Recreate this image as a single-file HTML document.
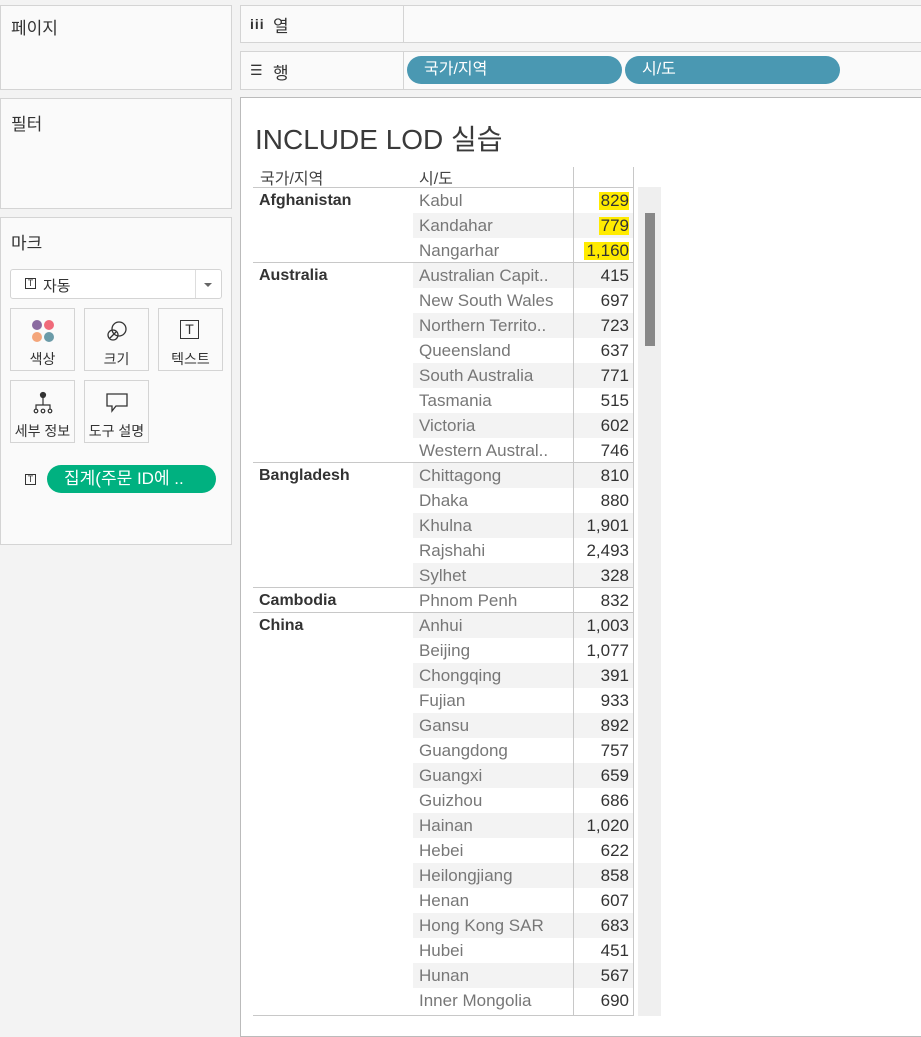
<!DOCTYPE html>
<html><head><meta charset="utf-8"><style>
*{margin:0;padding:0;box-sizing:border-box}
body{width:921px;height:1021px;background:#f3f3f3;position:relative;overflow:hidden;font-family:"Liberation Sans","Noto Sans CJK KR",sans-serif;color:#333}
.a{position:absolute}
.panel{position:absolute;background:#fafafa;border:1px solid #d4d4d4}
.lbl{position:absolute;font-size:17px;color:#333}
.pill{position:absolute;height:28px;border-radius:14px;background:#4a98b2;color:#fff;font-size:16px;line-height:28px;padding-left:17px;padding-top:0}
.card{position:absolute;width:65px;height:63px;border:1px solid #d4d4d4;background:#fafafa;font-size:14px;text-align:center}
.card span{position:absolute;left:0;right:0;top:40px}
.r{position:absolute;left:413px;width:220px;height:25px;font-size:17px;line-height:25px}
.r.s{background:#f3f3f3}
.r .c{position:absolute;left:6px;color:#777;white-space:nowrap}
.r .n{position:absolute;right:4px;color:#333}
.r .n.h{background:#ffeb00;padding-left:2px;top:4px;line-height:18px;height:18px}
.co{position:absolute;left:259px;font-size:16px;font-weight:bold;color:#333;line-height:25px}
.hl{position:absolute;left:253px;width:380px;height:1px;background:#c8c8c8}
</style></head><body>
<div class="panel" style="left:0;top:5px;width:232px;height:85px"></div>
<div class="lbl" style="left:11px;top:14px">페이지</div>
<div class="panel" style="left:0;top:98px;width:232px;height:111px"></div>
<div class="lbl" style="left:11px;top:110px">필터</div>
<div class="panel" style="left:0;top:217px;width:232px;height:328px"></div>
<div class="lbl" style="left:11px;top:229px">마크</div>
<div class="a" style="left:10px;top:269px;width:212px;height:30px;border:1px solid #d4d4d4;border-radius:3px;background:#fff"></div>
<div class="a" style="left:195px;top:270px;width:1px;height:28px;background:#ddd"></div>
<div class="a" style="left:204px;top:283px;border-left:4px solid transparent;border-right:4px solid transparent;border-top:4px solid #666"></div>
<div class="a" style="left:25px;top:278px;width:11px;height:11px;border:1px solid #333;font-size:9px;line-height:9px;text-align:center">T</div>
<div class="a" style="left:43px;top:275px;font-size:15px">자동</div>
<div class="card" style="left:10px;top:308px"><svg class="a" style="left:20px;top:10px" width="24" height="24"><circle cx="6" cy="6" r="5" fill="#8a6aa0"/><circle cx="18" cy="6" r="5" fill="#f06a7a"/><circle cx="6" cy="18" r="5" fill="#f4a57a"/><circle cx="18" cy="18" r="5" fill="#6b9ba8"/></svg><span>색상</span></div>
<div class="card" style="left:84px;top:308px"><svg class="a" style="left:20px;top:10px" width="24" height="24" fill="none" stroke="#333" stroke-width="1.3"><circle cx="14" cy="10" r="7"/><circle cx="8" cy="16" r="5"/><line x1="5" y1="19" x2="11" y2="13"/></svg><span>크기</span></div>
<div class="card" style="left:158px;top:308px"><div class="a" style="left:21px;top:11px;width:19px;height:19px;border:1.5px solid #333;font-size:14px;line-height:16px;text-align:center">T</div><span>텍스트</span></div>
<div class="card" style="left:10px;top:380px"><svg class="a" style="left:20px;top:10px" width="24" height="24" fill="none" stroke="#333" stroke-width="1.2"><circle cx="12" cy="4" r="2.5" fill="#333"/><line x1="12" y1="6" x2="12" y2="14"/><path d="M5 18V14H19V18"/><circle cx="5" cy="20" r="1.8"/><circle cx="12" cy="20" r="1.8"/><circle cx="19" cy="20" r="1.8"/></svg><span>세부 정보</span></div>
<div class="card" style="left:84px;top:380px"><svg class="a" style="left:20px;top:10px" width="24" height="24" fill="none" stroke="#333" stroke-width="1.3"><path d="M2 3H22V15H11L7 20V15H2Z"/></svg><span>도구 설명</span></div>
<div class="a" style="left:25px;top:474px;width:11px;height:11px;border:1px solid #333;font-size:9px;line-height:9px;text-align:center">T</div>
<div class="pill" style="left:47px;top:465px;width:169px;background:#00b180;font-size:17px;padding-left:17px">집계(주문 ID에 ..</div>

<div class="panel" style="left:240px;top:5px;width:690px;height:38px"></div>
<div class="a" style="left:403px;top:5px;width:1px;height:38px;background:#d4d4d4"></div>
<div class="a" style="left:250px;top:16px;font-size:14px;letter-spacing:1px;font-weight:bold">iii</div>
<div class="lbl" style="left:273px;top:12px">열</div>
<div class="panel" style="left:240px;top:51px;width:690px;height:39px"></div>
<div class="a" style="left:403px;top:51px;width:1px;height:39px;background:#d4d4d4"></div>
<div class="a" style="left:250px;top:62px;font-size:14px">☰</div>
<div class="lbl" style="left:273px;top:59px">행</div>
<div class="pill" style="left:407px;top:56px;width:215px">국가/지역</div>
<div class="pill" style="left:625px;top:56px;width:215px">시/도</div>

<div class="a" style="left:240px;top:97px;width:690px;height:940px;background:#fff;border:1px solid #bbb"></div>
<div class="a" style="left:255px;top:118px;font-size:28px;color:#3a3a3a">INCLUDE LOD 실습</div>
<div class="a" style="left:260px;top:165px;font-size:16px;color:#444">국가/지역</div>
<div class="a" style="left:419px;top:165px;font-size:16px;color:#444">시/도</div>
<div class="a" style="left:638px;top:187px;width:23px;height:829px;background:#efefef"></div>
<div class="a" style="left:645px;top:213px;width:10px;height:133px;background:#888"></div>

<div class="r" style="top:188px"><span class="c">Kabul</span><span class="n h">829</span></div>
<div class="r s" style="top:213px"><span class="c">Kandahar</span><span class="n h">779</span></div>
<div class="r" style="top:238px"><span class="c">Nangarhar</span><span class="n h">1,160</span></div>
<div class="r s" style="top:263px"><span class="c">Australian Capit..</span><span class="n">415</span></div>
<div class="r" style="top:288px"><span class="c">New South Wales</span><span class="n">697</span></div>
<div class="r s" style="top:313px"><span class="c">Northern Territo..</span><span class="n">723</span></div>
<div class="r" style="top:338px"><span class="c">Queensland</span><span class="n">637</span></div>
<div class="r s" style="top:363px"><span class="c">South Australia</span><span class="n">771</span></div>
<div class="r" style="top:388px"><span class="c">Tasmania</span><span class="n">515</span></div>
<div class="r s" style="top:413px"><span class="c">Victoria</span><span class="n">602</span></div>
<div class="r" style="top:438px"><span class="c">Western Austral..</span><span class="n">746</span></div>
<div class="r s" style="top:463px"><span class="c">Chittagong</span><span class="n">810</span></div>
<div class="r" style="top:488px"><span class="c">Dhaka</span><span class="n">880</span></div>
<div class="r s" style="top:513px"><span class="c">Khulna</span><span class="n">1,901</span></div>
<div class="r" style="top:538px"><span class="c">Rajshahi</span><span class="n">2,493</span></div>
<div class="r s" style="top:563px"><span class="c">Sylhet</span><span class="n">328</span></div>
<div class="r" style="top:588px"><span class="c">Phnom Penh</span><span class="n">832</span></div>
<div class="r s" style="top:613px"><span class="c">Anhui</span><span class="n">1,003</span></div>
<div class="r" style="top:638px"><span class="c">Beijing</span><span class="n">1,077</span></div>
<div class="r s" style="top:663px"><span class="c">Chongqing</span><span class="n">391</span></div>
<div class="r" style="top:688px"><span class="c">Fujian</span><span class="n">933</span></div>
<div class="r s" style="top:713px"><span class="c">Gansu</span><span class="n">892</span></div>
<div class="r" style="top:738px"><span class="c">Guangdong</span><span class="n">757</span></div>
<div class="r s" style="top:763px"><span class="c">Guangxi</span><span class="n">659</span></div>
<div class="r" style="top:788px"><span class="c">Guizhou</span><span class="n">686</span></div>
<div class="r s" style="top:813px"><span class="c">Hainan</span><span class="n">1,020</span></div>
<div class="r" style="top:838px"><span class="c">Hebei</span><span class="n">622</span></div>
<div class="r s" style="top:863px"><span class="c">Heilongjiang</span><span class="n">858</span></div>
<div class="r" style="top:888px"><span class="c">Henan</span><span class="n">607</span></div>
<div class="r s" style="top:913px"><span class="c">Hong Kong SAR</span><span class="n">683</span></div>
<div class="r" style="top:938px"><span class="c">Hubei</span><span class="n">451</span></div>
<div class="r s" style="top:963px"><span class="c">Hunan</span><span class="n">567</span></div>
<div class="r" style="top:988px"><span class="c">Inner Mongolia</span><span class="n">690</span></div>

<div class="co" style="top:188px">Afghanistan</div>
<div class="co" style="top:263px">Australia</div>
<div class="co" style="top:463px">Bangladesh</div>
<div class="co" style="top:588px">Cambodia</div>
<div class="co" style="top:613px">China</div>

<div class="hl" style="top:187px"></div>
<div class="hl" style="top:262px"></div>
<div class="hl" style="top:462px"></div>
<div class="hl" style="top:587px"></div>
<div class="hl" style="top:612px"></div>
<div class="hl" style="top:1015px"></div>
<div class="a" style="left:573px;top:167px;width:1px;height:849px;background:#c8c8c8"></div>
<div class="a" style="left:633px;top:167px;width:1px;height:849px;background:#c8c8c8"></div>
</body></html>
